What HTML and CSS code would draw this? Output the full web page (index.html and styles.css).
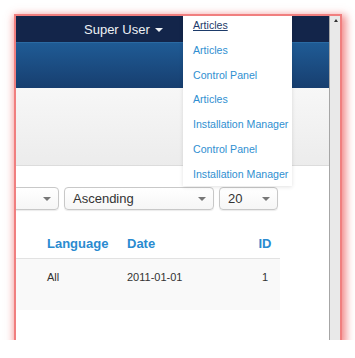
FILE: index.html
```html
<!DOCTYPE html>
<html>
<head>
  <title>Admin</title>
  <link rel="stylesheet" href="styles.css">
</head>
<body>
  <div class="shot">
    <div class="shot-view">
      <div class="topbar">
        <span class="topbar-user">Super User <span class="caret caret-light"></span></span>
      </div>
      <div class="header"></div>
      <div class="subhead"></div>

      <div class="filters">
        <div class="select select-cut"><span class="caret"></span></div>
        <div class="select select-order"><span class="select-text">Ascending</span><span class="caret"></span></div>
        <div class="select select-limit"><span class="select-text">20</span><span class="caret"></span></div>
      </div>

      <div class="list">
        <div class="list-row list-head">
          <div class="col col-lang">Language</div>
          <div class="col col-date">Date</div>
          <div class="col col-id">ID</div>
        </div>
        <div class="list-row list-item">
          <div class="col col-lang">All</div>
          <div class="col col-date">2011-01-01</div>
          <div class="col col-id">1</div>
        </div>
      </div>

      <!-- меню последних страниц -->
      <ul class="recent-menu">
        <li><a class="active" href="#">Articles</a></li>
        <li><a href="#">Articles</a></li>
        <li><a href="#">Control Panel</a></li>
        <li><a href="#">Articles</a></li>
        <li><a href="#">Installation Manager</a></li>
        <li><a href="#">Control Panel</a></li>
        <li><a href="#">Installation Manager</a></li>
      </ul>
    </div>
    <div class="scrollbar"><span class="scroll-arrow"></span></div>
  </div>
</body>
</html>
```

FILE: styles.css
```css
body {
    margin: 0;
    background: #fff;
    font-family: "Liberation Sans", Arial, sans-serif;
}

/* Рамка скриншота */
.shot {
    display: flex;
    width: 324px;
    height: 324px;
    margin: 16px 0 0 16px;
    overflow: hidden;
    box-shadow: 0 0 0 2px #f07f7f, 2px 3px 8px 4px rgba(236, 90, 90, 0.7);
}

.shot-view {
    position: relative;
    flex: 1;
    overflow: hidden;
    background: #fff;
}

.scrollbar {
    position: relative;
    width: 10px;
    background: #e9e9e9;
    border-left: 1px solid #a6a6a6;
}

.scroll-arrow {
    position: absolute;
    top: 3px;
    left: 4px;
    width: 0;
    height: 0;
    border-left: 2px solid transparent;
    border-right: 2px solid transparent;
    border-bottom: 3px solid #333;
}

/* Верхняя панель */
.topbar {
    height: 26px;
    background: #13254a;
    display: flex;
    align-items: center;
    padding-left: 68px;
}

.topbar-user {
    color: #eef1f5;
    font-size: 13px;
}

.caret {
    display: inline-block;
    width: 0;
    height: 0;
    border-left: 4px solid transparent;
    border-right: 4px solid transparent;
    border-top: 4px solid #777;
    vertical-align: middle;
}

.caret-light {
    border-top-color: #eef1f5;
    margin-left: 2px;
}

.header {
    height: 46px;
    background: linear-gradient(#1f5b95, #173e6f);
    border-top: 1px solid #2a6aa3;
    box-sizing: border-box;
}

.subhead {
    height: 77px;
    background: linear-gradient(#f7f7f7, #ececec);
    border-bottom: 1px solid #dcdcdc;
}

/* Фильтры */
.filters {
    display: flex;
    gap: 5px;
    margin-top: 21px;
}

.select {
    height: 23px;
    box-sizing: border-box;
    border: 1px solid #c8c8c8;
    border-radius: 4px;
    background: linear-gradient(#fff, #f6f6f6);
    box-shadow: 0 1px 1px rgba(0, 0, 0, 0.08);
    display: flex;
    align-items: center;
    justify-content: space-between;
    padding: 0 7px 0 8px;
}

.select-text {
    font-size: 13px;
    color: #333;
}

.select-cut {
    width: 100px;
    margin-left: -57px;
    justify-content: flex-end;
}

.select-order {
    width: 150px;
}

.select-limit {
    width: 59px;
}

/* Таблица */
.list {
    width: 264px;
    margin-top: 19px;
}

.list-row {
    display: flex;
    align-items: center;
}

.list-head {
    height: 29px;
    border-bottom: 1px solid #e2e2e2;
    font-size: 13px;
    font-weight: bold;
    color: #2a8bd0;
}

.list-item {
    height: 51px;
    align-items: flex-start;
    padding-top: 12px;
    box-sizing: border-box;
    background: #f9f9f9;
    font-size: 11px;
    color: #333;
}

.col-lang {
    width: 80px;
    padding-left: 31px;
}

.col-date {
    width: 126px;
}

.col-id {
    width: 24px;
    text-align: center;
}

/* Выпадающее меню */
.recent-menu {
    position: absolute;
    top: -4px;
    left: 167px;
    width: 109px;
    margin: 0;
    padding: 0 0 0 10px;
    box-sizing: border-box;
    list-style: none;
    background: #fff;
    box-shadow: 0 1px 4px rgba(0, 0, 0, 0.12);
}

.recent-menu li {
    height: 24.8px;
    line-height: 24px;
}

.recent-menu a {
    font-size: 10.6px;
    color: #2f8fd1;
    text-decoration: none;
    white-space: nowrap;
}

.recent-menu a.active {
    color: #1d3b6a;
    text-decoration: underline;
}
```
